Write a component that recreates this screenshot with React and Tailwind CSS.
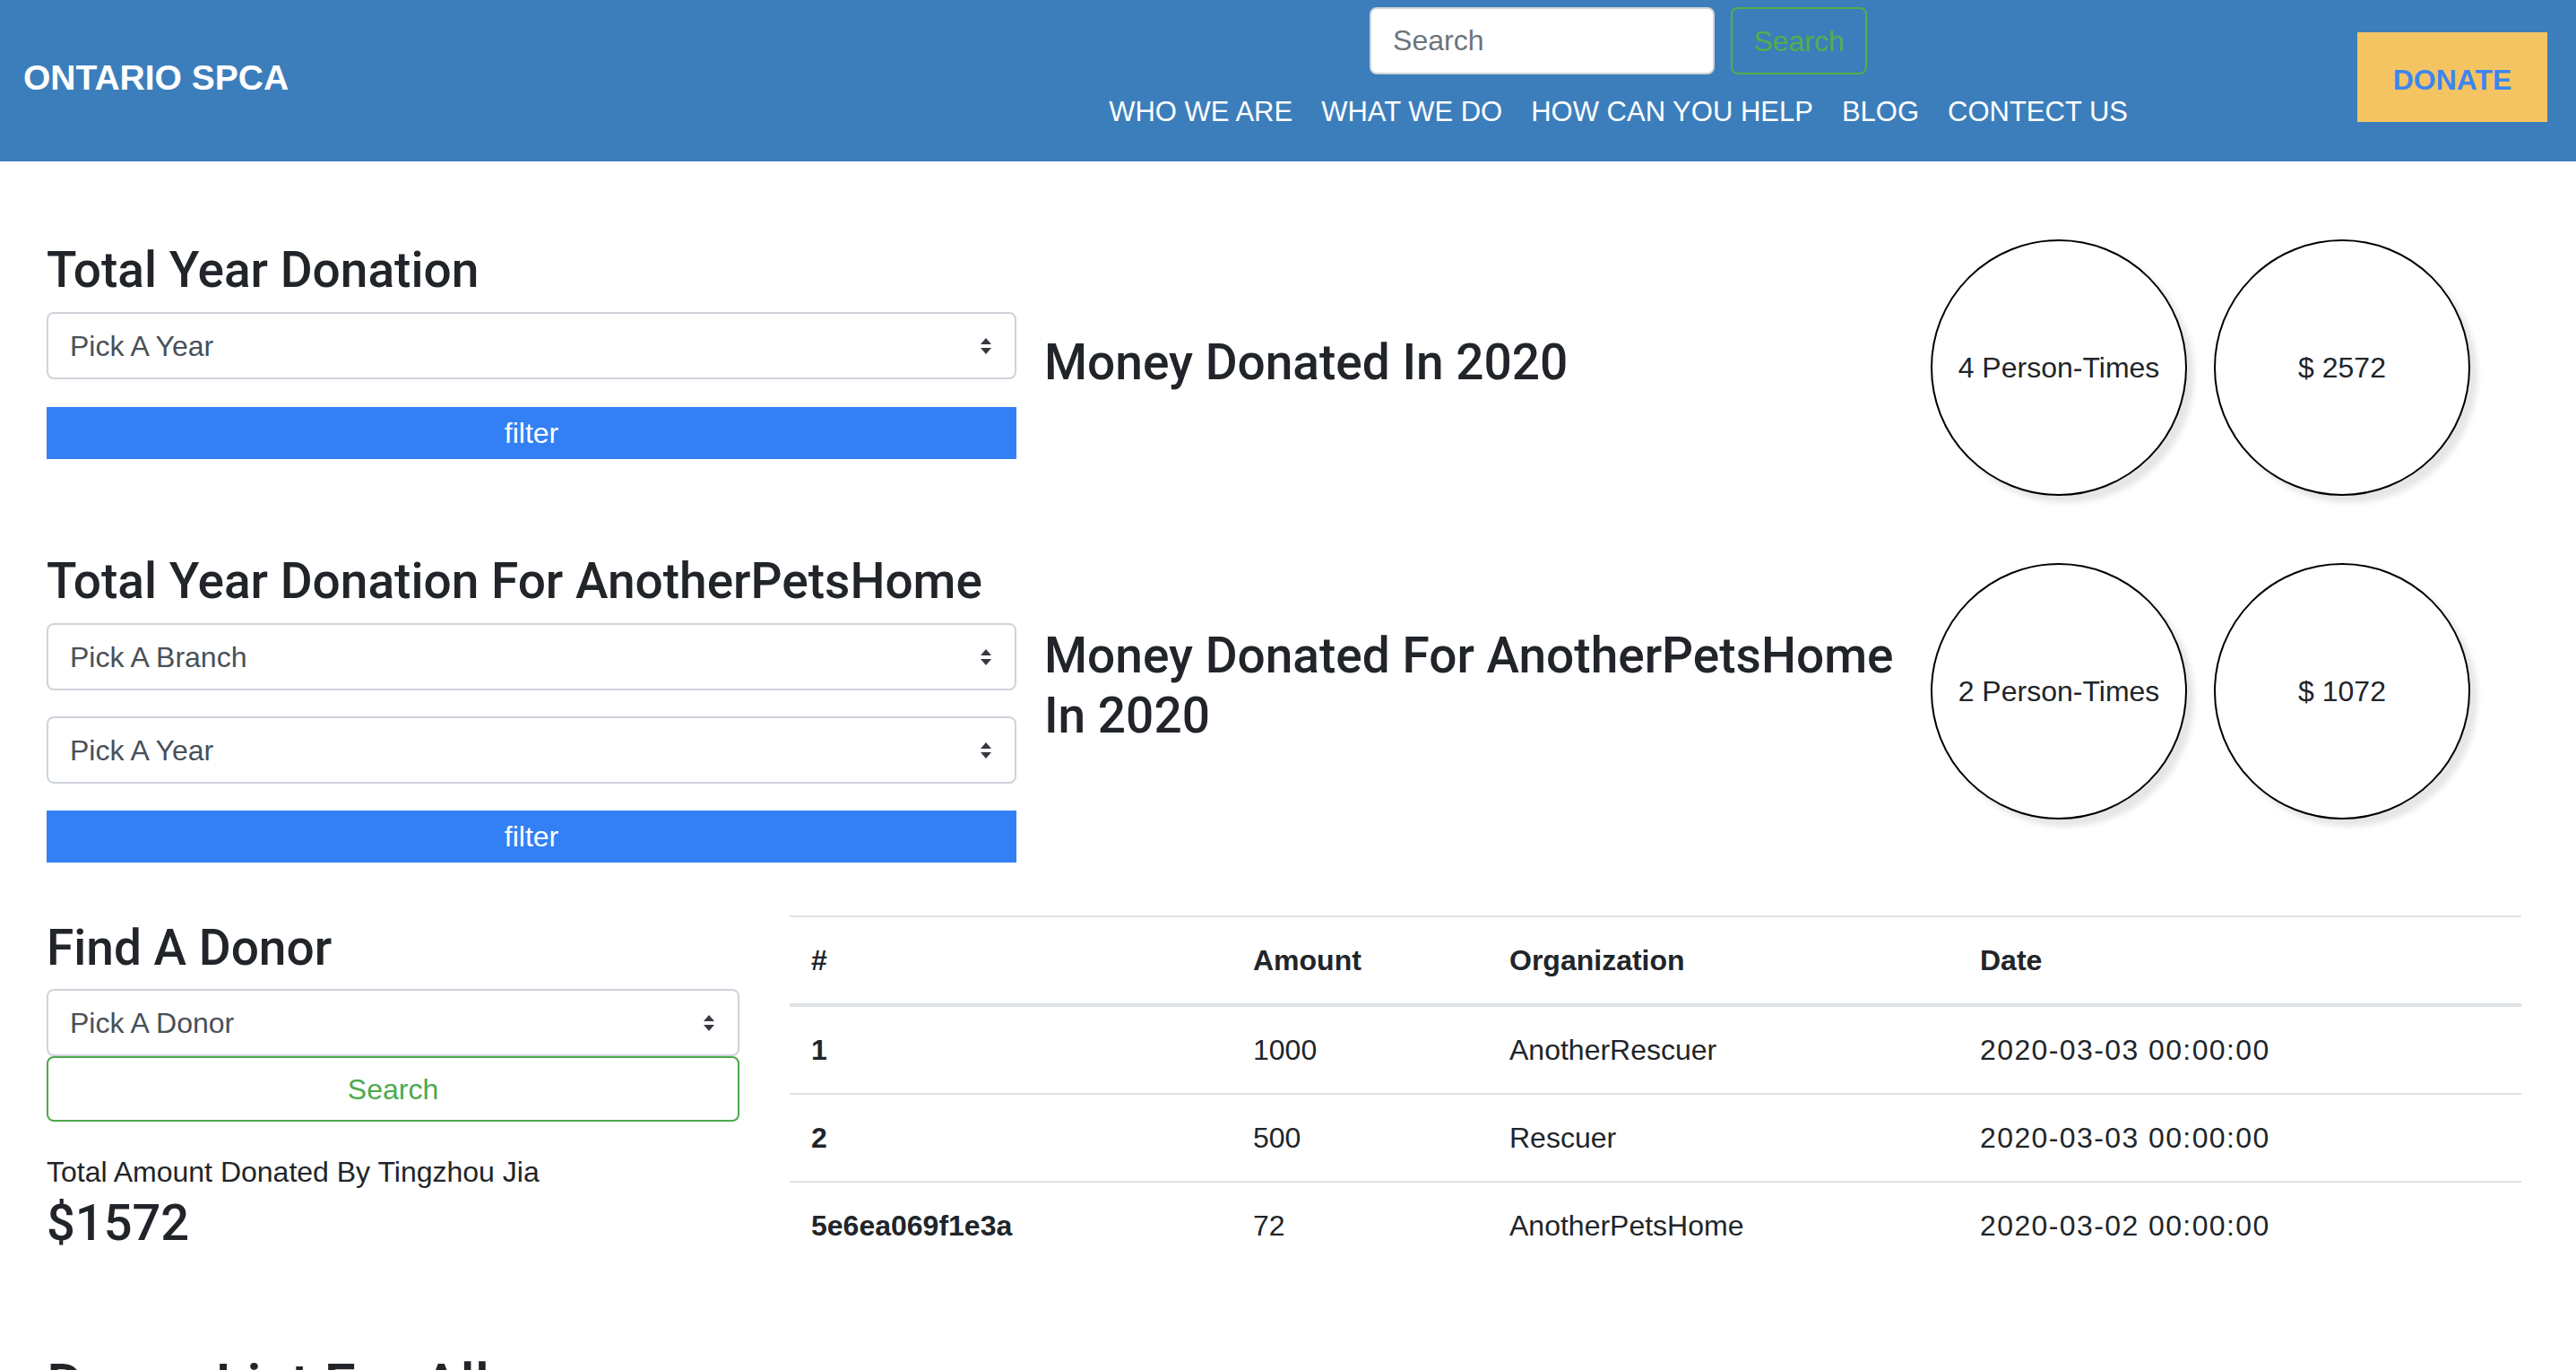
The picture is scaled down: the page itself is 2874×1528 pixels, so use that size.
import React from 'react';

const NAV_LINKS = ['WHO WE ARE', 'WHAT WE DO', 'HOW CAN YOU HELP', 'BLOG', 'CONTECT US'];

const DONATIONS = [
  { id: '1', amount: '1000', org: 'AnotherRescuer', date: '2020-03-03 00:00:00' },
  { id: '2', amount: '500', org: 'Rescuer', date: '2020-03-03 00:00:00' },
  { id: '5e6ea069f1e3a', amount: '72', org: 'AnotherPetsHome', date: '2020-03-02 00:00:00' },
];

function SelectArrows() {
  return (
    <svg width="16" height="22" viewBox="0 0 16 22" className="shrink-0">
      <polygon points="8,2 14,9 2,9" fill="#343a40" />
      <polygon points="2,13 14,13 8,20" fill="#343a40" />
    </svg>
  );
}

function FakeSelect({ label, className = '' }) {
  return (
    <div
      className={`flex h-[75px] w-full items-center justify-between rounded-lg border-2 border-[#ced4da] bg-white pl-[24px] pr-[24px] text-[32px] text-[#495057] ${className}`}
    >
      <span>{label}</span>
      <SelectArrows />
    </div>
  );
}

function FilterButton({ className = '' }) {
  return (
    <button
      type="button"
      className={`block h-[58px] w-full bg-[#3380f5] text-[32px] leading-[58px] text-white ${className}`}
    >
      filter
    </button>
  );
}

function Heading({ children, className = '' }) {
  return (
    <h3
      className={`text-[55px] font-medium leading-[67px] text-[#212529] ${className}`}
      style={{ fontFamily: 'Roboto, "Liberation Sans", sans-serif' }}
    >
      {children}
    </h3>
  );
}

function Bubble({ children }) {
  return (
    <div className="flex h-[286px] w-[286px] items-center justify-center rounded-full border-2 border-black bg-white text-[32px] text-[#212529] shadow-[8px_8px_6px_#e6e6e6]">
      {children}
    </div>
  );
}

function StatsGroup({ title, people, amount, className = '' }) {
  return (
    <div className={`ml-[31px] flex items-center ${className}`}>
      <div className="w-[989px] pb-[12px]">
        <Heading>{title}</Heading>
      </div>
      <div className="flex gap-[30px]">
        <Bubble>{people} Person-Times</Bubble>
        <Bubble>$ {amount}</Bubble>
      </div>
    </div>
  );
}

export default function App() {
  const cell = 'px-[24px] py-[24px]';

  return (
    <div
      className="min-h-screen bg-white text-[#212529]"
      style={{ fontFamily: '"Liberation Sans", Arial, sans-serif' }}
    >
      <nav className="flex h-[180px] items-center bg-[#3c7ebb] pl-[26px] pr-[32px]">
        <a className="mb-[6px] text-[39px] font-bold text-white">ONTARIO SPCA</a>

        <div className="ml-auto mr-[240px] flex flex-col items-center self-start pt-[8px]">
          <form className="flex gap-[18px]">
            <input
              type="text"
              placeholder="Search"
              className="h-[75px] w-[385px] rounded-lg border-2 border-[#ced4da] bg-white px-[24px] text-[32px] text-[#495057] placeholder:text-[#6c757d]"
            />
            <button
              type="button"
              className="h-[75px] w-[152px] rounded-lg border-2 border-[#56ad4a] text-[32px] text-[#56ad4a]"
            >
              Search
            </button>
          </form>
          <ul className="mt-[2px] flex">
            {NAV_LINKS.map((link) => (
              <li key={link}>
                <a className="block px-[16px] py-[16px] text-[31px] leading-[48px] text-white">{link}</a>
              </li>
            ))}
          </ul>
        </div>

        <button
          type="button"
          className="mb-[8px] h-[100px] w-[212px] bg-[#f5c462] pt-[6px] text-[32px] font-bold text-[#3d85f0]"
        >
          DONATE
        </button>
      </nav>

      <main className="pl-[52px] pr-[60px] pt-[84px]">
        {/* total year donation */}
        <section className="flex items-start">
          <div className="w-[1082px] shrink-0">
            <Heading className="mb-[13px] pt-[4px]">Total Year Donation</Heading>
            <FakeSelect label="Pick A Year" />
            <FilterButton className="mt-[31px]" />
          </div>
          <StatsGroup className="mt-[3px]" title="Money Donated In 2020" people="4" amount="2572" />
        </section>

        {/* branch donation */}
        <section className="mt-[60px] flex items-start">
          <div className="w-[1082px] shrink-0">
            <Heading className="mb-[13px] pt-[2px]">Total Year Donation For AnotherPetsHome</Heading>
            <FakeSelect label="Pick A Branch" />
            <FakeSelect label="Pick A Year" className="mt-[29px]" />
            <FilterButton className="mt-[30px]" />
          </div>
          <StatsGroup
            className="mt-[15px]"
            title="Money Donated For AnotherPetsHome In 2020"
            people="2"
            amount="1072"
          />
        </section>

        {/* donor lookup + table */}
        <section className="mt-[59px] flex items-start">
          <div className="w-[773px] shrink-0 pt-[3px]">
            <Heading className="mb-[12px]">Find A Donor</Heading>
            <FakeSelect label="Pick A Donor" className="h-[74px]" />
            <button
              type="button"
              className="block h-[73px] w-full rounded-lg border-2 border-[#4caa4c] text-[32px] text-[#4caa4c]"
            >
              Search
            </button>
            <p className="mt-[32px] text-[32px] leading-[48px]">Total Amount Donated By Tingzhou Jia</p>
            <p
              className="text-[56px] font-medium leading-[67px]"
              style={{ fontFamily: 'Roboto, "Liberation Sans", sans-serif' }}
            >
              $1572
            </p>
          </div>

          <table className="ml-[56px] w-[1932px] table-fixed border-collapse text-left text-[32px] leading-[48px]">
            <colgroup>
              <col className="w-[493px]" />
              <col className="w-[286px]" />
              <col className="w-[525px]" />
              <col className="w-[628px]" />
            </colgroup>
            <thead>
              <tr>
                {['#', 'Amount', 'Organization', 'Date'].map((h) => (
                  <th
                    key={h}
                    className={`border-t-2 border-b-4 border-[#dee2e6] ${cell} align-bottom font-bold`}
                  >
                    {h}
                  </th>
                ))}
              </tr>
            </thead>
            <tbody>
              {DONATIONS.map((row, i) => {
                const line = i > 0 ? 'border-t-2 border-[#dee2e6]' : '';
                return (
                  <tr key={row.id}>
                    <th className={`${cell} ${line} font-bold`}>{row.id}</th>
                    <td className={`${cell} ${line}`}>{row.amount}</td>
                    <td className={`${cell} ${line}`}>{row.org}</td>
                    <td className={`${cell} ${line} tracking-[1.4px]`}>{row.date}</td>
                  </tr>
                );
              })}
            </tbody>
          </table>
        </section>

        <h2
          className="mt-[92px] pb-[40px] text-[64px] font-medium leading-[77px]"
          style={{ fontFamily: 'Roboto, "Liberation Sans", sans-serif' }}
        >
          Donor List For All
        </h2>
      </main>
    </div>
  );
}
